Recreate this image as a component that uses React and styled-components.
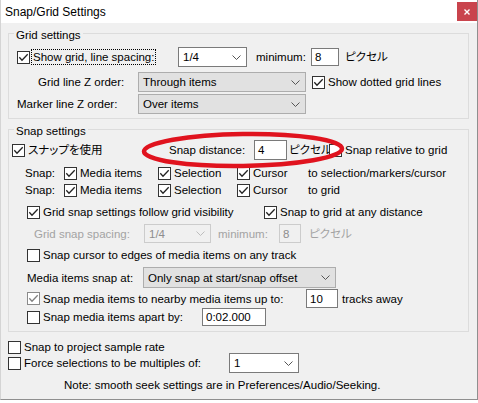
import React from "react"
import styled, { createGlobalStyle } from "styled-components"

const Global = createGlobalStyle`
  body {
    margin: 0;
    background: #ffffff;
    font-family: "Liberation Sans", "Noto Sans CJK JP", sans-serif;
    font-size: 11.5px;
    font-feature-settings: "palt";
    color: #000;
  }
`

const Window = styled.div`
  width: 478px;
  height: 400px;
  box-sizing: border-box;
  background: #f0f0f0;
  border-left: 1px solid #d4d4d4;
  border-right: 1px solid #8f8f8f;
  border-bottom: 1px solid #8f8f8f;
  position: relative;
  display: flex;
  flex-direction: column;
`

const TitleBar = styled.div`
  height: 23px;
  flex: none;
  background: #ffffff;
  display: flex;
  justify-content: space-between;
  align-items: center;
  padding-left: 4px;
  font-size: 12px;
`

const CloseBtn = styled.div`
  width: 20px;
  height: 19px;
  align-self: flex-start;
  margin-top: 2px;
  background: #c9444d;
  display: flex;
  align-items: center;
  justify-content: center;
`

const Body = styled.div`
  padding: 1px 8px 0 7px;
  display: flex;
  flex-direction: column;
`

const Group = styled.fieldset`
  margin: ${({mt}) => mt || 0}px 0 0 0;
  padding: 0;
  border: 1px solid #dcdcdc;
  min-width: 0;
`

const Legend = styled.legend`
  margin-left: 5px;
  padding: 4px 2px 0;
  line-height: 14px;
`

const Rows = styled.div`
  display: flex;
  flex-direction: column;
  padding: ${({pad}) => pad};
`

const Row = styled.div`
  display: flex;
  align-items: center;
  height: ${({h}) => h}px;
  margin-top: ${({mt}) => mt || 0}px;
  white-space: nowrap;
`

const Txt = styled.span`
  flex: none;
  width: ${({w}) => (w ? `${w}px` : "auto")};
  margin-left: ${({ml}) => ml || 0}px;
  color: ${({off}) => (off ? "#a3a3a3" : "#000")};
  line-height: 14px;
`

const Item = styled.label`
  flex: none;
  display: flex;
  align-items: center;
  width: ${({w}) => (w ? `${w}px` : "auto")};
  margin-left: ${({ml}) => ml || 0}px;
  line-height: 14px;
`

const Box = styled.span`
  width: 13px;
  height: 13px;
  box-sizing: border-box;
  flex: none;
  background: #fff;
  border: 1px solid ${({soft}) => (soft ? "#8a8a8a" : "#333")};
  display: flex;
  align-items: center;
  justify-content: center;
  margin-right: 3px;
`

const Focus = styled.span`
  border: 1px dotted #000;
  padding: 0 1px;
  margin-left: -2px;
  line-height: 14px;
`

const Combo = styled.div`
  flex: none;
  width: ${({w}) => w}px;
  height: ${({h}) => h}px;
  box-sizing: border-box;
  display: flex;
  align-items: center;
  justify-content: space-between;
  padding: 0 5px 0 4px;
  background: ${({kind}) => (kind === "list" ? "#ffffff" : kind === "off" ? "#f0f0f0" : "#e1e1e1")};
  border: 1px solid ${({kind}) => (kind === "list" ? "#7a7a7a" : kind === "off" ? "#cccccc" : "#adadad")};
  color: ${({kind}) => (kind === "off" ? "#8d8d8d" : "#000")};
`

const Field = styled.div`
  flex: none;
  width: ${({w}) => w}px;
  height: ${({h}) => h}px;
  box-sizing: border-box;
  display: flex;
  align-items: center;
  padding-left: 3px;
  background: ${({off}) => (off ? "#f0f0f0" : "#ffffff")};
  border: 1px solid ${({off}) => (off ? "#cccccc" : "#7a7a7a")};
  color: ${({off}) => (off ? "#8d8d8d" : "#000")};
`

const Ring = styled.svg`
  position: absolute;
  left: 139px;
  top: 129px;
  pointer-events: none;
`

function Chevron({off}) {
  return (
    <svg width="9" height="5" viewBox="0 0 9 5">
      <path d="M0.5 0.5 L4.5 4.5 L8.5 0.5" fill="none" stroke={off ? "#bdbdbd" : "#555"} strokeWidth="1" />
    </svg>
  )
}

function Check({on, label, w, ml, soft, focus}) {
  return (
    <Item w={w} ml={ml}>
      <Box soft={soft}>
        {on && (
          <svg width="11" height="11" viewBox="0 0 11 11">
            <path d="M1.3 5.3 L4 8.2 L9.7 2.2" fill="none" stroke={soft ? "#808080" : "#222"} strokeWidth="1.3" />
          </svg>
        )}
      </Box>
      {focus ? <Focus>{label}</Focus> : label}
    </Item>
  )
}

function Select({w, h, kind, value}) {
  return (
    <Combo w={w} h={h} kind={kind}>
      <span>{value}</span>
      <Chevron off={kind === "off"} />
    </Combo>
  )
}

export default function App() {
  return (
    <>
      <Global />
      <Window>
        <TitleBar>
          <span>Snap/Grid Settings</span>
          <CloseBtn>
            <svg width="6" height="6" viewBox="0 0 6 6">
              <path d="M0.5 0.5 L5.5 5.5 M5.5 0.5 L0.5 5.5" stroke="#fff" strokeWidth="1.4" />
            </svg>
          </CloseBtn>
        </TitleBar>
        <Body>
          <Group>
            <Legend>Grid settings</Legend>
            <Rows pad="5px 0 4px 8px">
              <Row h={20}>
                <Check on focus w={161} label="Show grid, line spacing:" />
                <Select w={69} h={20} kind="list" value="1/4" />
                <Txt ml={9} w={55}>minimum:</Txt>
                <Field w={28} h={18}>8</Field>
                <Txt ml={6}>ピクセル</Txt>
              </Row>
              <Row h={20} mt={5}>
                <Txt ml={21} w={100}>Grid line Z order:</Txt>
                <Select w={168} h={20} value="Through items" />
                <Check on ml={6} label="Show dotted grid lines" />
              </Row>
              <Row h={20} mt={2}>
                <Txt w={121}>Marker line Z order:</Txt>
                <Select w={168} h={20} value="Over items" />
              </Row>
            </Rows>
          </Group>

          <Group mt={1}>
            <Legend>Snap settings</Legend>
            <Rows pad="1px 0 5px 3px">
              <Row h={22}>
                <Check on w={157} label="スナップを使用" />
                <Txt w={85}>Snap distance:</Txt>
                <Field w={33} h={20}>4</Field>
                <Txt ml={2} w={39}>ピクセル</Txt>
                <Check ml={1} label="Snap relative to grid" />
              </Row>
              <Row h={16} mt={4}>
                <Txt ml={13} w={39}>Snap:</Txt>
                <Check on w={94} label="Media items" />
                <Check on w={79} label="Selection" />
                <Check on w={71} label="Cursor" />
                <Txt>to selection/markers/cursor</Txt>
              </Row>
              <Row h={16} mt={1}>
                <Txt ml={13} w={39}>Snap:</Txt>
                <Check on w={94} label="Media items" />
                <Check on w={79} label="Selection" />
                <Check on w={71} label="Cursor" />
                <Txt>to grid</Txt>
              </Row>
              <Row h={16} mt={6}>
                <Check on ml={15} w={237} label="Grid snap settings follow grid visibility" />
                <Check on label="Snap to grid at any distance" />
              </Row>
              <Row h={19} mt={4}>
                <Txt off ml={22} w={110}>Grid snap spacing:</Txt>
                <Select w={67} h={19} kind="off" value="1/4" />
                <Txt off ml={7} w={61}>minimum:</Txt>
                <Field off w={22} h={19}>8</Field>
                <Txt off ml={8}>ピクセル</Txt>
              </Row>
              <Row h={16} mt={4}>
                <Check ml={15} label="Snap cursor to edges of media items on any track" />
              </Row>
              <Row h={21} mt={4}>
                <Txt ml={15} w={116}>Media items snap at:</Txt>
                <Select w={193} h={21} value="Only snap at start/snap offset" />
              </Row>
              <Row h={19} mt={1}>
                <Check on soft ml={15} w={279} label="Snap media items to nearby media items up to:" />
                <Field w={32} h={19}>10</Field>
                <Txt ml={4}>tracks away</Txt>
              </Row>
              <Row h={18}>
                <Check ml={15} w={175} label="Snap media items apart by:" />
                <Field w={64} h={18}>0:02.000</Field>
              </Row>
            </Rows>
          </Group>

          <Rows pad="9px 0 0 0">
            <Row h={12}>
              <Check label="Snap to project sample rate" />
            </Row>
            <Row h={20}>
              <Check w={221} label="Force selections to be multiples of:" />
              <Select w={70} h={20} kind="list" value="1" />
            </Row>
            <Row h={14} mt={5}>
              <Txt ml={56}>Note: smooth seek settings are in Preferences/Audio/Seeking.</Txt>
            </Row>
          </Rows>
        </Body>

        <Ring width="208" height="42" viewBox="0 0 208 42">
          <ellipse cx="103" cy="21" rx="99" ry="16" fill="none" stroke="#e0131e" strokeWidth="4.5" transform="rotate(-0.8 103 21)" />
        </Ring>
      </Window>
    </>
  )
}
